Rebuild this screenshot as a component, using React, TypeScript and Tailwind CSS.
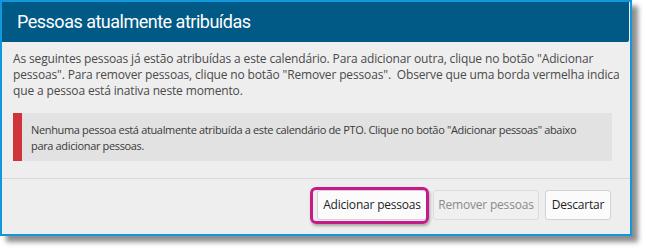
export default function App() {
  return (
    <div className="w-[646px] h-[251px] bg-white" style={{ fontFamily: '"Open Sans", "Noto Sans", sans-serif' }}>
      <div className="w-[632px] h-[236px] border-2 border-[#1197dc] bg-[#eeeeee] shadow-[6px_6px_5px_rgba(0,0,0,0.45)] flex flex-col">
        {/* Header */}
        <div className="h-[40px] bg-[#015a86] mr-px rounded-br-[2px] flex items-center pl-[15px]">
          <h1 className="text-[18px] text-white leading-none font-['Roboto',sans-serif] tracking-[-0.5px]">
            Pessoas atualmente atribuídas
          </h1>
        </div>

        {/* Body */}
        <div className="px-[11px] pt-[9px] text-[12px] leading-[16px] text-[#4a4a4a] tracking-[-0.15px]">
          <p className="whitespace-nowrap">
            As seguintes pessoas já estão atribuídas a este calendário. Para adicionar outra, clique no botão "Adicionar
            <br />
            pessoas". Para remover pessoas, clique no botão "Remover pessoas".&nbsp; Observe que uma borda vermelha indica
            <br />
            que a pessoa está inativa neste momento.
          </p>

          <div className="mt-[14px] w-[599px] h-[48px] bg-[#e2e2e2] flex">
            <div className="w-[9px] bg-[#d0343a] shrink-0" />
            <p className="pl-[9px] pt-[9px] text-[11px] leading-[16px] tracking-[-0.35px] text-[#3a3a3a] whitespace-nowrap">
              Nenhuma pessoa está atualmente atribuída a este calendário de PTO. Clique no botão "Adicionar pessoas" abaixo
              <br />
              para adicionar pessoas.
            </p>
          </div>
        </div>

        {/* Footer */}
        <div className="mt-[17px] border-t border-[#d9d9d9] flex justify-end gap-[6px] pr-[19px] pt-[11px] text-[12px] tracking-[-0.2px]">
          <button className="relative w-[110px] h-[30px] bg-[#fbfbfb] border border-[#d2d2d2] rounded-[3px] text-[#1e1e1e]">
            Adicionar pessoas
            <span className="absolute -left-[8px] -right-[3px] -top-[4px] -bottom-[5px] border-[3px] border-[#c8198a] rounded-[6px] shadow-[1px_2px_3px_rgba(0,0,0,0.3)]" />
          </button>
          <button className="w-[106px] h-[30px] bg-[#f0f0f0] border border-[#dcdcdc] rounded-[3px] text-[#8a8a8a]">
            Remover pessoas
          </button>
          <button className="w-[66px] h-[30px] bg-[#fbfbfb] border border-[#d2d2d2] rounded-[3px] text-[#1e1e1e]">
            Descartar
          </button>
        </div>
      </div>
    </div>
  );
}
